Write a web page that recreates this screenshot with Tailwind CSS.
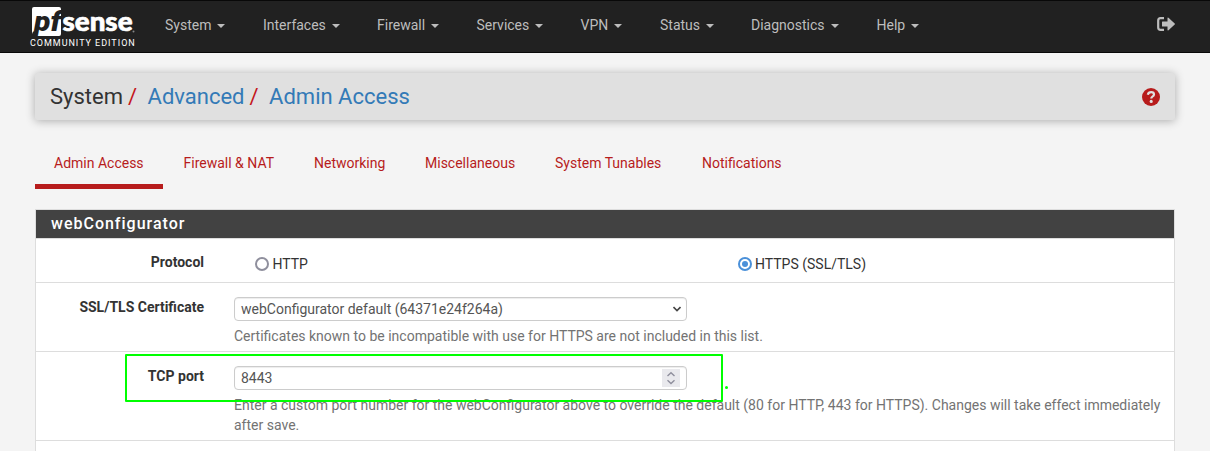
<!DOCTYPE html>
<html lang="en">
<head>
<meta charset="utf-8">
<title>System / Advanced / Admin Access</title>
<script src="https://cdn.jsdelivr.net/npm/@tailwindcss/browser@4"></script>
</head>
<body class="h-[451px] overflow-hidden bg-[#f4f4f4] font-[Roboto,sans-serif] text-sm leading-5 text-[#333]">
<nav class="flex h-[53px] border-t border-b border-t-[#080808] border-b-[#080808] bg-[#212121] pl-[30px] pr-[35px] text-[#bdbdbd]">
  <div class="w-[135px] shrink-0 pt-[6px] text-white">
    <svg class="ml-[2px] block overflow-visible" width="106" height="30" viewBox="0 0 106 30">
      <path d="M2 0H27Q29 0 29 2V27Q29 29 27 29H4L5 25L1 24.500L0 27V2Q0 0 2 0Z" fill="#fff"/>
      <text x="2" y="24" font-family="Roboto" font-weight="900" font-style="italic" font-size="28" textLength="27" lengthAdjust="spacingAndGlyphs" fill="#212121">pf</text>
      <text x="30.500" y="24" font-family="Lato" font-weight="900" font-size="26.500" textLength="70" lengthAdjust="spacingAndGlyphs" fill="#fff" stroke="#fff" stroke-width=".7">sense</text>
      <circle cx="101.500" cy="24.500" r="1" fill="#888"/>
    </svg>
    <div class="text-[9px] leading-[13px] tracking-[0.97px] whitespace-nowrap">COMMUNITY EDITION</div>
  </div>
  <ul class="flex grow pt-[14px] [&>li]:flex [&>li]:shrink-0 [&>li]:items-center [&>li]:gap-[6px] [&>li]:h-5 [&_i]:mt-px [&_i]:border-x-4 [&_i]:border-t-4 [&_i]:border-x-transparent [&_i]:border-t-[#bdbdbd]">
    <li class="w-[98px]">System<i></i></li>
    <li class="w-[114px]">Interfaces<i></i></li>
    <li class="w-[99.500px]">Firewall<i></i></li>
    <li class="w-[104px]">Services<i></i></li>
    <li class="w-[79.500px]">VPN<i></i></li>
    <li class="w-[91px]">Status<i></i></li>
    <li class="w-[125.500px]">Diagnostics<i></i></li>
    <li>Help<i></i></li>
  </ul>
  <svg class="mt-[16px] shrink-0" width="18" height="14" viewBox="0 0 18 14" fill="none"><path d="M7 1.200H3.500Q1.200 1.200 1.200 3.500V10.500Q1.200 12.800 3.500 12.800H7" stroke="#bdbdbd" stroke-width="2.200"/><path d="M5.500 4.500H10.500V1.200Q10.500 0 11.500 .7L17.700 6.400Q18.300 7 17.700 7.600L11.500 13.300Q10.500 14 10.500 12.800V9.500H5.500Q5 9.500 5 9V5Q5 4.500 5.500 4.500Z" fill="#bdbdbd"/></svg>
</nav>
<main class="px-[35px] pt-[20px]">
  <header class="flex h-[47px] items-center rounded-[2px] bg-[#e0e0e0] pl-[15px] pr-[15px] text-[22px] shadow-[0_1px_10px_rgba(0,0,0,0.3)]">
    <span>System</span><span class="ml-[5px] text-[#c4161c]">/</span>
    <span class="ml-[10.500px] text-[#337ab7]">Advanced</span><span class="ml-[5px] text-[#c4161c]">/</span>
    <span class="ml-[10.500px] text-[#337ab7]">Admin Access</span>
    <svg class="ml-auto" width="18" height="18" viewBox="0 0 18 18"><circle cx="9" cy="9" r="9" fill="#b71c1c"/><path d="M5.800 6.700Q6.500 4.200 9.100 4.200Q12 4.200 12 6.500Q12 7.700 10.400 8.600Q9.300 9.200 9.300 10.600" fill="none" stroke="#e0e0e0" stroke-width="2.200"/><circle cx="9.200" cy="13.400" r="1.550" fill="#e0e0e0"/></svg>
  </header>
  <ul class="mt-[20px] flex h-[49px] text-[#b71c1c] [&>li]:shrink-0 [&>li]:pt-[13px]">
    <li class="w-[128px] border-b-5 border-[#b71c1c] pl-[19px]">Admin Access</li>
    <li class="w-[131px] pl-[20.500px]">Firewall &amp; NAT</li>
    <li class="w-[111px] pl-[20px]">Networking</li>
    <li class="w-[130px] pl-[20px]">Miscellaneous</li>
    <li class="w-[147px] pl-[20px]">System Tunables</li>
    <li class="pl-[20px]">Notifications</li>
  </ul>
  <section class="relative mt-[20px] h-[260px] border border-[#ddd] bg-white">
    <h2 class="h-7 bg-[#424242] pl-[15px] text-[16px] leading-[27px] font-medium tracking-[1px] text-white">webConfigurator</h2>
    <div class="flex h-[45px] border-y border-[#ddd] pt-[13px]">
      <b class="w-[168px] shrink-0 text-right">Protocol</b>
      <div class="ml-[51px] flex h-6 w-[483px] items-center gap-[3.500px]"><span class="size-[14px] rounded-full border-2 border-[#8f8f9d]"></span>HTTP</div>
      <div class="flex h-6 items-center gap-[3px]"><span class="flex size-[14px] items-center justify-center rounded-full border-2 border-[#4a90d9]"><span class="size-[6px] rounded-full bg-[#4a90d9]"></span></span>HTTPS (SSL/TLS)</div>
    </div>
    <div class="flex h-[69px] border-b border-[#ddd] pt-[14px]">
      <b class="w-[168px] shrink-0 text-right">SSL/TLS Certificate</b>
      <div class="ml-[30px] text-[#737373]">
        <div class="flex h-6 w-[453px] items-center justify-between rounded-[4px] border border-[#ccc] bg-white pl-[6px] pr-[5px] text-[#555] shadow-[inset_0_1px_1px_rgba(0,0,0,0.075)]">webConfigurator default (64371e24f264a)<svg width="8" height="6" viewBox="0 0 8 6"><path d="M.5 1L4 4.500L7.500 1" fill="none" stroke="#444" stroke-width="1.600"/></svg></div>
        <p class="mt-[5px]">Certificates known to be incompatible with use for HTTPS are not included in this list.</p>
      </div>
    </div>
    <div class="flex h-[89px] border-b border-[#ddd] pt-[14px]">
      <b class="w-[168px] shrink-0 text-right">TCP port</b>
      <div class="ml-[30px] text-[#737373]">
        <div class="flex h-6 w-[453px] items-center justify-between rounded-[4px] border border-[#ccc] bg-white pl-[6px] pr-[6px] text-[#555] shadow-[inset_0_1px_1px_rgba(0,0,0,0.075)]">8443<svg width="18" height="18" viewBox="0 0 18 18"><path d="M0 0H18V18H0Z" fill="#e9e9ed"/><path d="M5.500 7L9 3.700L12.500 7M5.500 11.200L9 14.500L12.500 11.200" fill="none" stroke="#8f8f9d" stroke-width="1.400"/></svg></div>
        <p class="mt-[5px] whitespace-nowrap">Enter a custom port number for the webConfigurator above to override the default (80 for HTTP, 443 for HTTPS). Changes will take effect immediately<br>after save.</p>
      </div>
    </div>
    <div class="absolute top-[144px] left-[89px] h-[48px] w-[598px] rounded-[1px] border-2 border-[#0f0]"></div>
    <div class="absolute top-[176px] left-[689px] size-[3px] rounded-full bg-[#0f0]"></div>
  </section>
</main>
</body>
</html>
